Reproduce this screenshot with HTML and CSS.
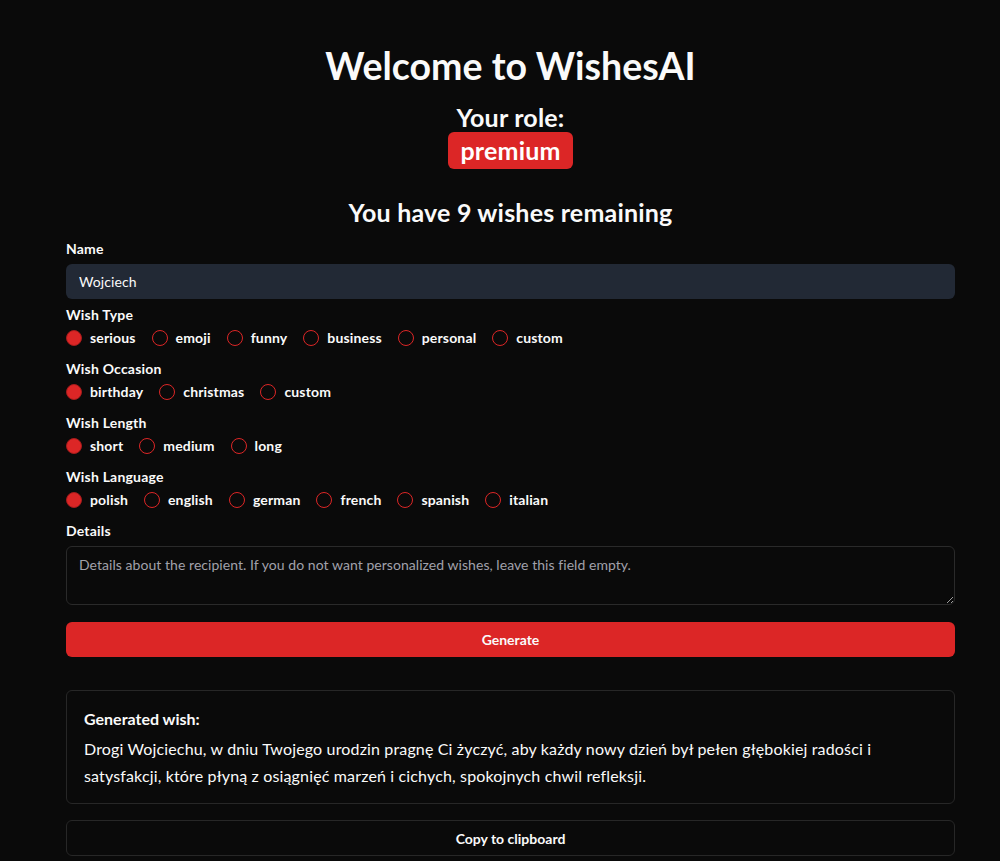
FILE: index.html
```html
<!DOCTYPE html>
<html lang="en">
<head>
<meta charset="utf-8">
<title>WishesAI</title>
<link rel="stylesheet" href="styles.css">
</head>
<body>
<main class="page">
  <h1 class="title">Welcome to WishesAI</h1>
  <div class="role">
    <h2 class="role-label">Your role:</h2>
    <span class="badge">premium</span>
  </div>
  <h2 class="remaining">You have 9 wishes remaining</h2>

  <form class="form">
    <div class="field">
      <label class="label">Name</label>
      <input class="input" type="text" value="Wojciech">
    </div>

    <div class="field">
      <span class="label">Wish Type</span>
      <div class="radios">
        <label class="radio"><span class="dot checked"></span>serious</label>
        <label class="radio"><span class="dot"></span>emoji</label>
        <label class="radio"><span class="dot"></span>funny</label>
        <label class="radio"><span class="dot"></span>business</label>
        <label class="radio"><span class="dot"></span>personal</label>
        <label class="radio"><span class="dot"></span>custom</label>
      </div>
    </div>

    <div class="field">
      <span class="label">Wish Occasion</span>
      <div class="radios">
        <label class="radio"><span class="dot checked"></span>birthday</label>
        <label class="radio"><span class="dot"></span>christmas</label>
        <label class="radio"><span class="dot"></span>custom</label>
      </div>
    </div>

    <div class="field">
      <span class="label">Wish Length</span>
      <div class="radios">
        <label class="radio"><span class="dot checked"></span>short</label>
        <label class="radio"><span class="dot"></span>medium</label>
        <label class="radio"><span class="dot"></span>long</label>
      </div>
    </div>

    <div class="field">
      <span class="label">Wish Language</span>
      <div class="radios">
        <label class="radio"><span class="dot checked"></span>polish</label>
        <label class="radio"><span class="dot"></span>english</label>
        <label class="radio"><span class="dot"></span>german</label>
        <label class="radio"><span class="dot"></span>french</label>
        <label class="radio"><span class="dot"></span>spanish</label>
        <label class="radio"><span class="dot"></span>italian</label>
      </div>
    </div>

    <div class="field">
      <label class="label">Details</label>
      <textarea class="textarea" placeholder="Details about the recipient. If you do not want personalized wishes, leave this field empty."></textarea>
    </div>

    <button type="button" class="btn-primary">Generate</button>
  </form>

  <section class="result">
    <h3 class="result-title">Generated wish:</h3>
    <p class="result-text">Drogi Wojciechu, w dniu Twojego urodzin pragnę Ci życzyć, aby każdy nowy dzień był pełen głębokiej radości i satysfakcji, które płyną z osiągnięć marzeń i cichych, spokojnych chwil refleksji.</p>
  </section>

  <button type="button" class="btn-outline">Copy to clipboard</button>
</main>
</body>
</html>
```

FILE: styles.css
```css
* { box-sizing: border-box; }

html, body {
  margin: 0;
  padding: 0;
  background: #0a0a0a;
  color: #fafafa;
  font-family: Lato, "Noto Sans", sans-serif;
}

.page {
  width: 889px;
  margin-left: 66px;
  padding-top: 44px;
  display: flex;
  flex-direction: column;
  align-items: stretch;
}

.title {
  margin: 0;
  text-align: center;
  font-size: 37.5px;
  line-height: 44px;
  font-weight: 700;
}

.role {
  margin-top: 15px;
  display: flex;
  flex-direction: column;
  align-items: center;
}

.role-label {
  margin: 0;
  font-size: 25px;
  line-height: 29px;
  letter-spacing: 0.2px;
  font-weight: 700;
}

.badge {
  background: #dc2626;
  color: #fff;
  border-radius: 6px;
  padding: 0 12.5px;
  height: 37px;
  line-height: 37px;
  font-size: 25px;
  letter-spacing: 0.2px;
  font-weight: 700;
}

.remaining {
  margin: 27px 0 0;
  text-align: center;
  font-size: 25px;
  line-height: 32px;
  letter-spacing: 0.2px;
  font-weight: 700;
}

.form {
  margin-top: 11px;
  display: flex;
  flex-direction: column;
  gap: 6px;
}

.field {
  display: flex;
  flex-direction: column;
}

.label {
  font-size: 14px;
  line-height: 20px;
  letter-spacing: 0.2px;
  font-weight: 700;
}

.input,
.textarea {
  margin-top: 5px;
}

.input {
  height: 35px;
  background: #222935;
  border: none;
  border-radius: 6px;
  color: #fafafa;
  font-family: inherit;
  font-size: 14px;
  letter-spacing: 0.1px;
  padding: 0 13px;
  outline: none;
}

.radios {
  display: flex;
  gap: 16px;
  height: 28px;
  padding-bottom: 3px;
  align-items: center;
}

.radio {
  display: flex;
  align-items: center;
  gap: 8px;
  font-size: 14px;
  letter-spacing: 0.15px;
  font-weight: 700;
}

.dot {
  width: 16px;
  height: 16px;
  border-radius: 50%;
  border: 1.5px solid #dc2626;
}

.dot.checked {
  background: #dc2626;
  border-color: #a51c1c;
}

.textarea {
  height: 59px;
  background: #0a0a0a;
  border: 1px solid #2a2a2a;
  border-radius: 6px;
  color: #fafafa;
  font-family: inherit;
  font-size: 14px;
  letter-spacing: 0.05px;
  line-height: 20px;
  padding: 8px 12px;
  resize: vertical;
  outline: none;
}

.textarea::placeholder {
  color: #a1a1aa;
}

.btn-primary {
  margin-top: 11px;
  height: 35px;
  background: #dc2626;
  color: #fafafa;
  border: none;
  border-radius: 6px;
  font-family: inherit;
  font-size: 14px;
  font-weight: 700;
}

.result {
  margin-top: 33px;
  border: 1px solid #272727;
  border-radius: 6px;
  padding: 16px 17px 14px;
}

.result-title {
  margin: 0 0 4px;
  font-size: 16px;
  line-height: 24px;
  font-weight: 700;
}

.result-text {
  margin: 0;
  font-size: 16px;
  line-height: 27px;
  letter-spacing: 0.15px;
}

.btn-outline {
  margin-top: 16px;
  height: 36px;
  background: #0a0a0a;
  color: #fafafa;
  border: 1px solid #272727;
  border-radius: 6px;
  font-family: inherit;
  font-size: 14px;
  font-weight: 700;
}
```
